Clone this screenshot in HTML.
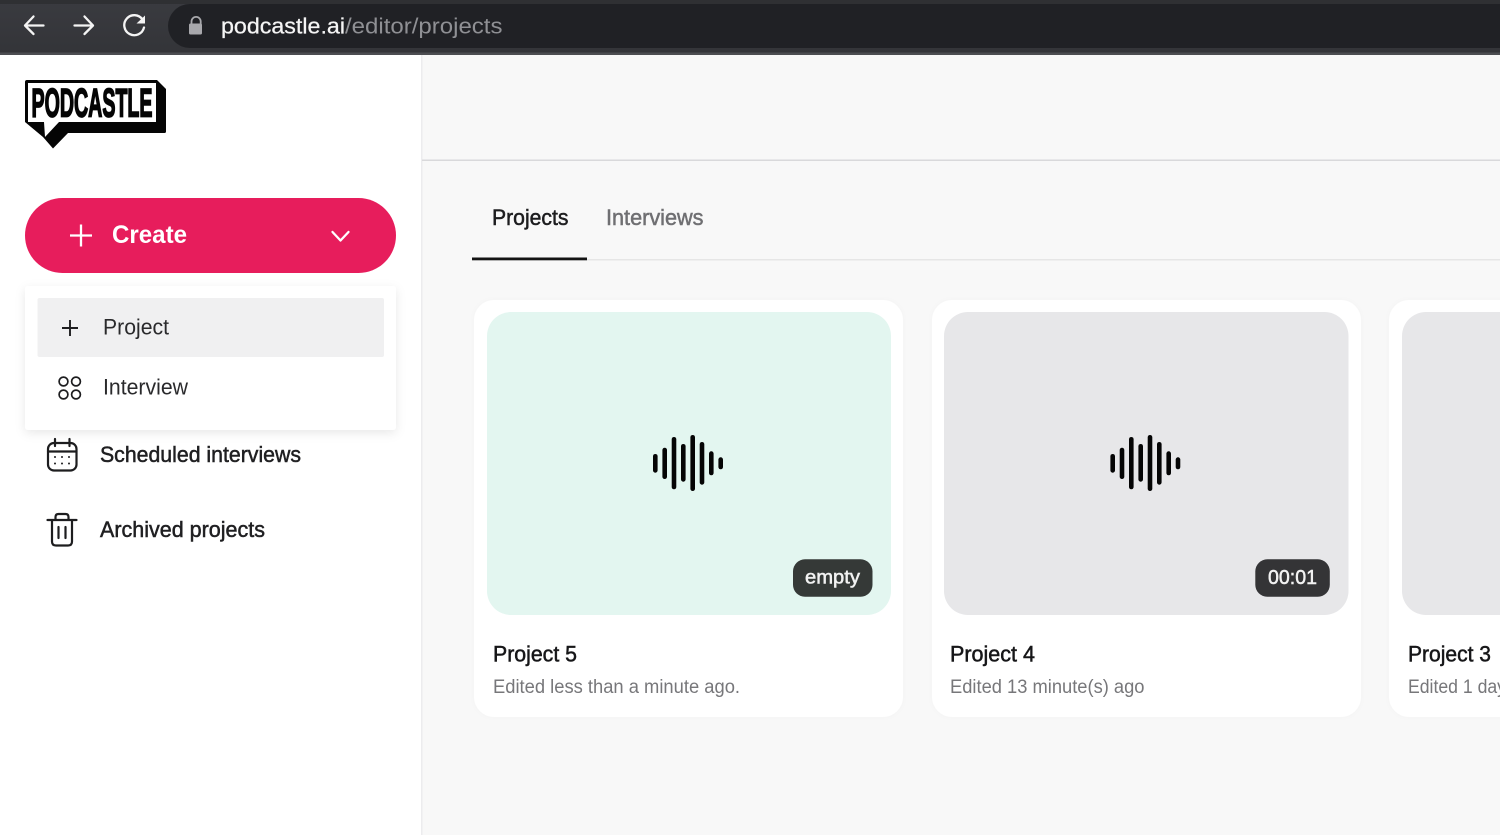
<!DOCTYPE html>
<html lang="en">
<head>
<meta charset="utf-8">
<title>Podcastle projects</title>
<style>
html,body{margin:0;padding:0;width:1500px;height:835px;overflow:hidden;background:#f8f8f8}
svg{display:block;position:absolute;left:0;top:0}
text{font-family:"Liberation Sans",sans-serif}
.m{stroke-width:.5;paint-order:stroke}
</style>
</head>
<body>
<svg width="1500" height="835" viewBox="0 0 1500 835" xmlns="http://www.w3.org/2000/svg">
<defs>
<linearGradient id="bar" x1="0" y1="0" x2="0" y2="1"><stop offset="0" stop-color="#3a3b40"/><stop offset="1" stop-color="#333438"/></linearGradient>
<filter id="sh" x="-10%" y="-20%" width="120%" height="140%"><feDropShadow dx="0" dy="3" stdDeviation="5" flood-color="#000" flood-opacity=".09"/></filter>
<filter id="cs" x="-5%" y="-5%" width="110%" height="110%"><feDropShadow dx="0" dy="0" stdDeviation="3" flood-color="#000" flood-opacity=".02"/></filter>
<clipPath id="clipR"><rect x="0" y="0" width="1500" height="835"/></clipPath>
</defs>

<!-- main backgrounds -->
<rect x="0" y="0" width="1500" height="835" fill="#f8f8f8"/>
<rect x="0" y="55" width="421" height="780" fill="#fff"/>
<rect x="421" y="55" width="1.5" height="780" fill="#ececee"/>
<rect x="422" y="159.5" width="1078" height="1.5" fill="#d9d9db"/>

<!-- browser bar -->
<rect x="0" y="0" width="1500" height="55" fill="url(#bar)"/>
<rect x="0" y="0" width="1500" height="4" fill="#2f3033"/>
<rect x="0" y="52.5" width="1500" height="2.5" fill="#4c4d51"/>
<path d="M190 4H1500V48H190a22 22 0 0 1 0-44Z" fill="#202125"/>
<g fill="none" stroke="#f4f4f4" stroke-width="2.3" stroke-linecap="round" stroke-linejoin="round">
<path d="M43.5 25.500H25M33.500 16.500L25 25.500L33.500 34"/>
<path d="M74.500 25.500H93M84.500 16.500L93 25.500L84.500 34"/>
<path d="M142.500 19.500A10 10 0 1 0 144 27.500"/>
</g>
<path d="M136.500 23.500L145 15.500V23.500Z" fill="#f4f4f4"/>
<path d="M191.500 24v-2.500a4.600 4.600 0 0 1 9.200 0V24" fill="none" stroke="#a8a8ac" stroke-width="1.8"/>
<rect x="189" y="23.500" width="13" height="11" rx="1.500" fill="#a8a8ac"/>
<text x="221" y="33.500" font-size="22.5" fill="#f5f5f5" stroke="#f5f5f5" stroke-width=".25" textLength="124" lengthAdjust="spacingAndGlyphs">podcastle.ai</text>
<text x="345" y="33.500" font-size="22.5" fill="#8f9094" textLength="157.500" lengthAdjust="spacingAndGlyphs">/editor/projects</text>

<!-- logo -->
<path d="M27 80H157L166 89V131.500Q166 133 164.500 133H68L53 148.500L43 137L25 122V82Q25 80 27 80Z" fill="#050505"/>
<path d="M28 83H156V122H59L45 137L44 122H28Z" fill="#fff"/>
<text x="31.500" y="116.500" font-size="40" font-weight="700" fill="#050505" stroke="#050505" stroke-width="1.700" textLength="121" lengthAdjust="spacingAndGlyphs">PODCASTLE</text>

<!-- create -->
<rect x="25" y="198" width="371" height="75" rx="37.500" fill="#e71d5c"/>
<path d="M70 235.500H92M81 224.500V246.500" stroke="#fff" stroke-width="2.300" fill="none"/>
<text x="112" y="243" font-size="25" font-weight="700" fill="#fff" textLength="75" lengthAdjust="spacingAndGlyphs">Create</text>
<path d="M332.500 232L340.500 240.500L348.500 232" fill="none" stroke="#fff" stroke-width="2.300" stroke-linecap="round" stroke-linejoin="round"/>

<!-- lower nav -->
<g fill="none" stroke="#1d1d1f" stroke-width="2.200" stroke-linecap="round" stroke-linejoin="round">
<rect x="48" y="443" width="28.500" height="27.500" rx="6"/>
<path d="M48 451.500H76.500M55 439V446M69.500 439V446"/>
<path d="M47.500 520H76.500M52 520V541.500Q52 545.500 56 545.500H68Q72 545.500 72 541.500V520M55.500 520V517Q55.500 514 58.500 514H65.500Q68.500 514 68.500 517V520M58.500 527V538M65.500 527V538"/>
</g>
<g fill="#1d1d1f">
<circle cx="55" cy="457" r="1"/><circle cx="62" cy="457" r="1"/><circle cx="69" cy="457" r="1"/>
<circle cx="55" cy="463.500" r="1"/><circle cx="62" cy="463.500" r="1"/><circle cx="69" cy="463.500" r="1"/>
</g>
<text x="100" y="462" font-size="22" fill="#1f1f21" stroke="#1f1f21" class="m" textLength="201" lengthAdjust="spacingAndGlyphs">Scheduled interviews</text>
<text x="100" y="537" font-size="22" fill="#1f1f21" stroke="#1f1f21" class="m" textLength="165" lengthAdjust="spacingAndGlyphs">Archived projects</text>

<!-- dropdown -->
<rect x="25" y="286" width="371" height="144" rx="3" fill="#fff" filter="url(#sh)"/>
<rect x="37.500" y="298" width="346.500" height="59" rx="2" fill="#f0f0f1"/>
<path d="M62 328H78M70 320V336" stroke="#1d1d1f" stroke-width="1.900" fill="none"/>
<text x="103" y="334.500" font-size="22" fill="#2a2a2c" textLength="66" lengthAdjust="spacingAndGlyphs">Project</text>
<g fill="none" stroke="#1d1d1f" stroke-width="1.700">
<circle cx="63.500" cy="381.500" r="4.400"/><circle cx="76" cy="381.500" r="4.400"/>
<circle cx="63.500" cy="394.500" r="4.400"/><circle cx="76" cy="394.500" r="4.400"/>
</g>
<text x="103" y="394.500" font-size="22" fill="#2a2a2c" textLength="85" lengthAdjust="spacingAndGlyphs">Interview</text>

<!-- tabs -->
<rect x="472" y="259" width="1028" height="1.500" fill="#e6e6e6"/>
<rect x="472" y="257.500" width="115" height="2.800" fill="#141414"/>
<text x="492" y="225" font-size="22" fill="#1d1d1f" stroke="#1d1d1f" class="m" textLength="76.500" lengthAdjust="spacingAndGlyphs">Projects</text>
<text x="606" y="225" font-size="22" fill="#6f6f72" stroke="#6f6f72" class="m" textLength="97.500" lengthAdjust="spacingAndGlyphs">Interviews</text>

<!-- card 1 -->
<rect x="474" y="300" width="429" height="417" rx="20" fill="#fff" filter="url(#cs)"/>
<rect x="487" y="312" width="404" height="303" rx="24" fill="#e3f6f0"/>
<g fill="#050505">
<rect x="653" y="454" width="4.600" height="18.700" rx="2.300"/>
<rect x="662.400" y="447.700" width="4.600" height="31.300" rx="2.300"/>
<rect x="671.700" y="437" width="4.600" height="52.300" rx="2.300"/>
<rect x="681" y="444" width="4.600" height="37.700" rx="2.300"/>
<rect x="690.400" y="435" width="4.600" height="56" rx="2.300"/>
<rect x="699.700" y="442" width="4.600" height="42.700" rx="2.300"/>
<rect x="709" y="451.300" width="4.600" height="24" rx="2.300"/>
<rect x="718.400" y="457.300" width="4.600" height="12" rx="2.300"/>
</g>
<rect x="793" y="559.300" width="79.500" height="37.500" rx="12" fill="#353937"/>
<text x="805" y="583.500" font-size="19" fill="#f2f2f2" stroke="#f2f2f2" class="m" textLength="55" lengthAdjust="spacingAndGlyphs">empty</text>
<text x="493" y="661.500" font-size="22" fill="#161618" stroke="#161618" class="m" textLength="84" lengthAdjust="spacingAndGlyphs">Project 5</text>
<text x="493" y="693" font-size="19" fill="#77777a" textLength="247" lengthAdjust="spacingAndGlyphs">Edited less than a minute ago.</text>

<!-- card 2 -->
<rect x="932" y="300" width="429" height="417" rx="20" fill="#fff" filter="url(#cs)"/>
<rect x="944" y="312" width="404.500" height="303" rx="24" fill="#e7e7e9"/>
<g fill="#050505">
<rect x="1110.400" y="454" width="4.600" height="18.700" rx="2.300"/>
<rect x="1119.700" y="447.700" width="4.600" height="31.300" rx="2.300"/>
<rect x="1129" y="437" width="4.600" height="52.300" rx="2.300"/>
<rect x="1138.400" y="444" width="4.600" height="37.700" rx="2.300"/>
<rect x="1147.700" y="435" width="4.600" height="56" rx="2.300"/>
<rect x="1157" y="442" width="4.600" height="42.700" rx="2.300"/>
<rect x="1166.400" y="451.300" width="4.600" height="24" rx="2.300"/>
<rect x="1175.700" y="457.300" width="4.600" height="12" rx="2.300"/>
</g>
<rect x="1255.300" y="559.300" width="74.500" height="37.500" rx="12" fill="#343436"/>
<text x="1268" y="584" font-size="20" fill="#f2f2f2" stroke="#f2f2f2" class="m" textLength="49" lengthAdjust="spacingAndGlyphs">00:01</text>
<text x="950" y="661.500" font-size="22" fill="#161618" stroke="#161618" class="m" textLength="85" lengthAdjust="spacingAndGlyphs">Project 4</text>
<text x="950" y="693" font-size="19" fill="#77777a" textLength="194.500" lengthAdjust="spacingAndGlyphs">Edited 13 minute(s) ago</text>

<!-- card 3 -->
<g clip-path="url(#clipR)">
<rect x="1389" y="300" width="429" height="417" rx="20" fill="#fff" filter="url(#cs)"/>
<rect x="1402" y="312" width="404" height="303" rx="24" fill="#e7e7e9"/>
<text x="1408" y="661.500" font-size="22" fill="#161618" stroke="#161618" class="m" textLength="83" lengthAdjust="spacingAndGlyphs">Project 3</text>
<text x="1408" y="693" font-size="19" fill="#77777a" textLength="98" lengthAdjust="spacingAndGlyphs">Edited 1 day</text>
</g>
</svg>
</body>
</html>
